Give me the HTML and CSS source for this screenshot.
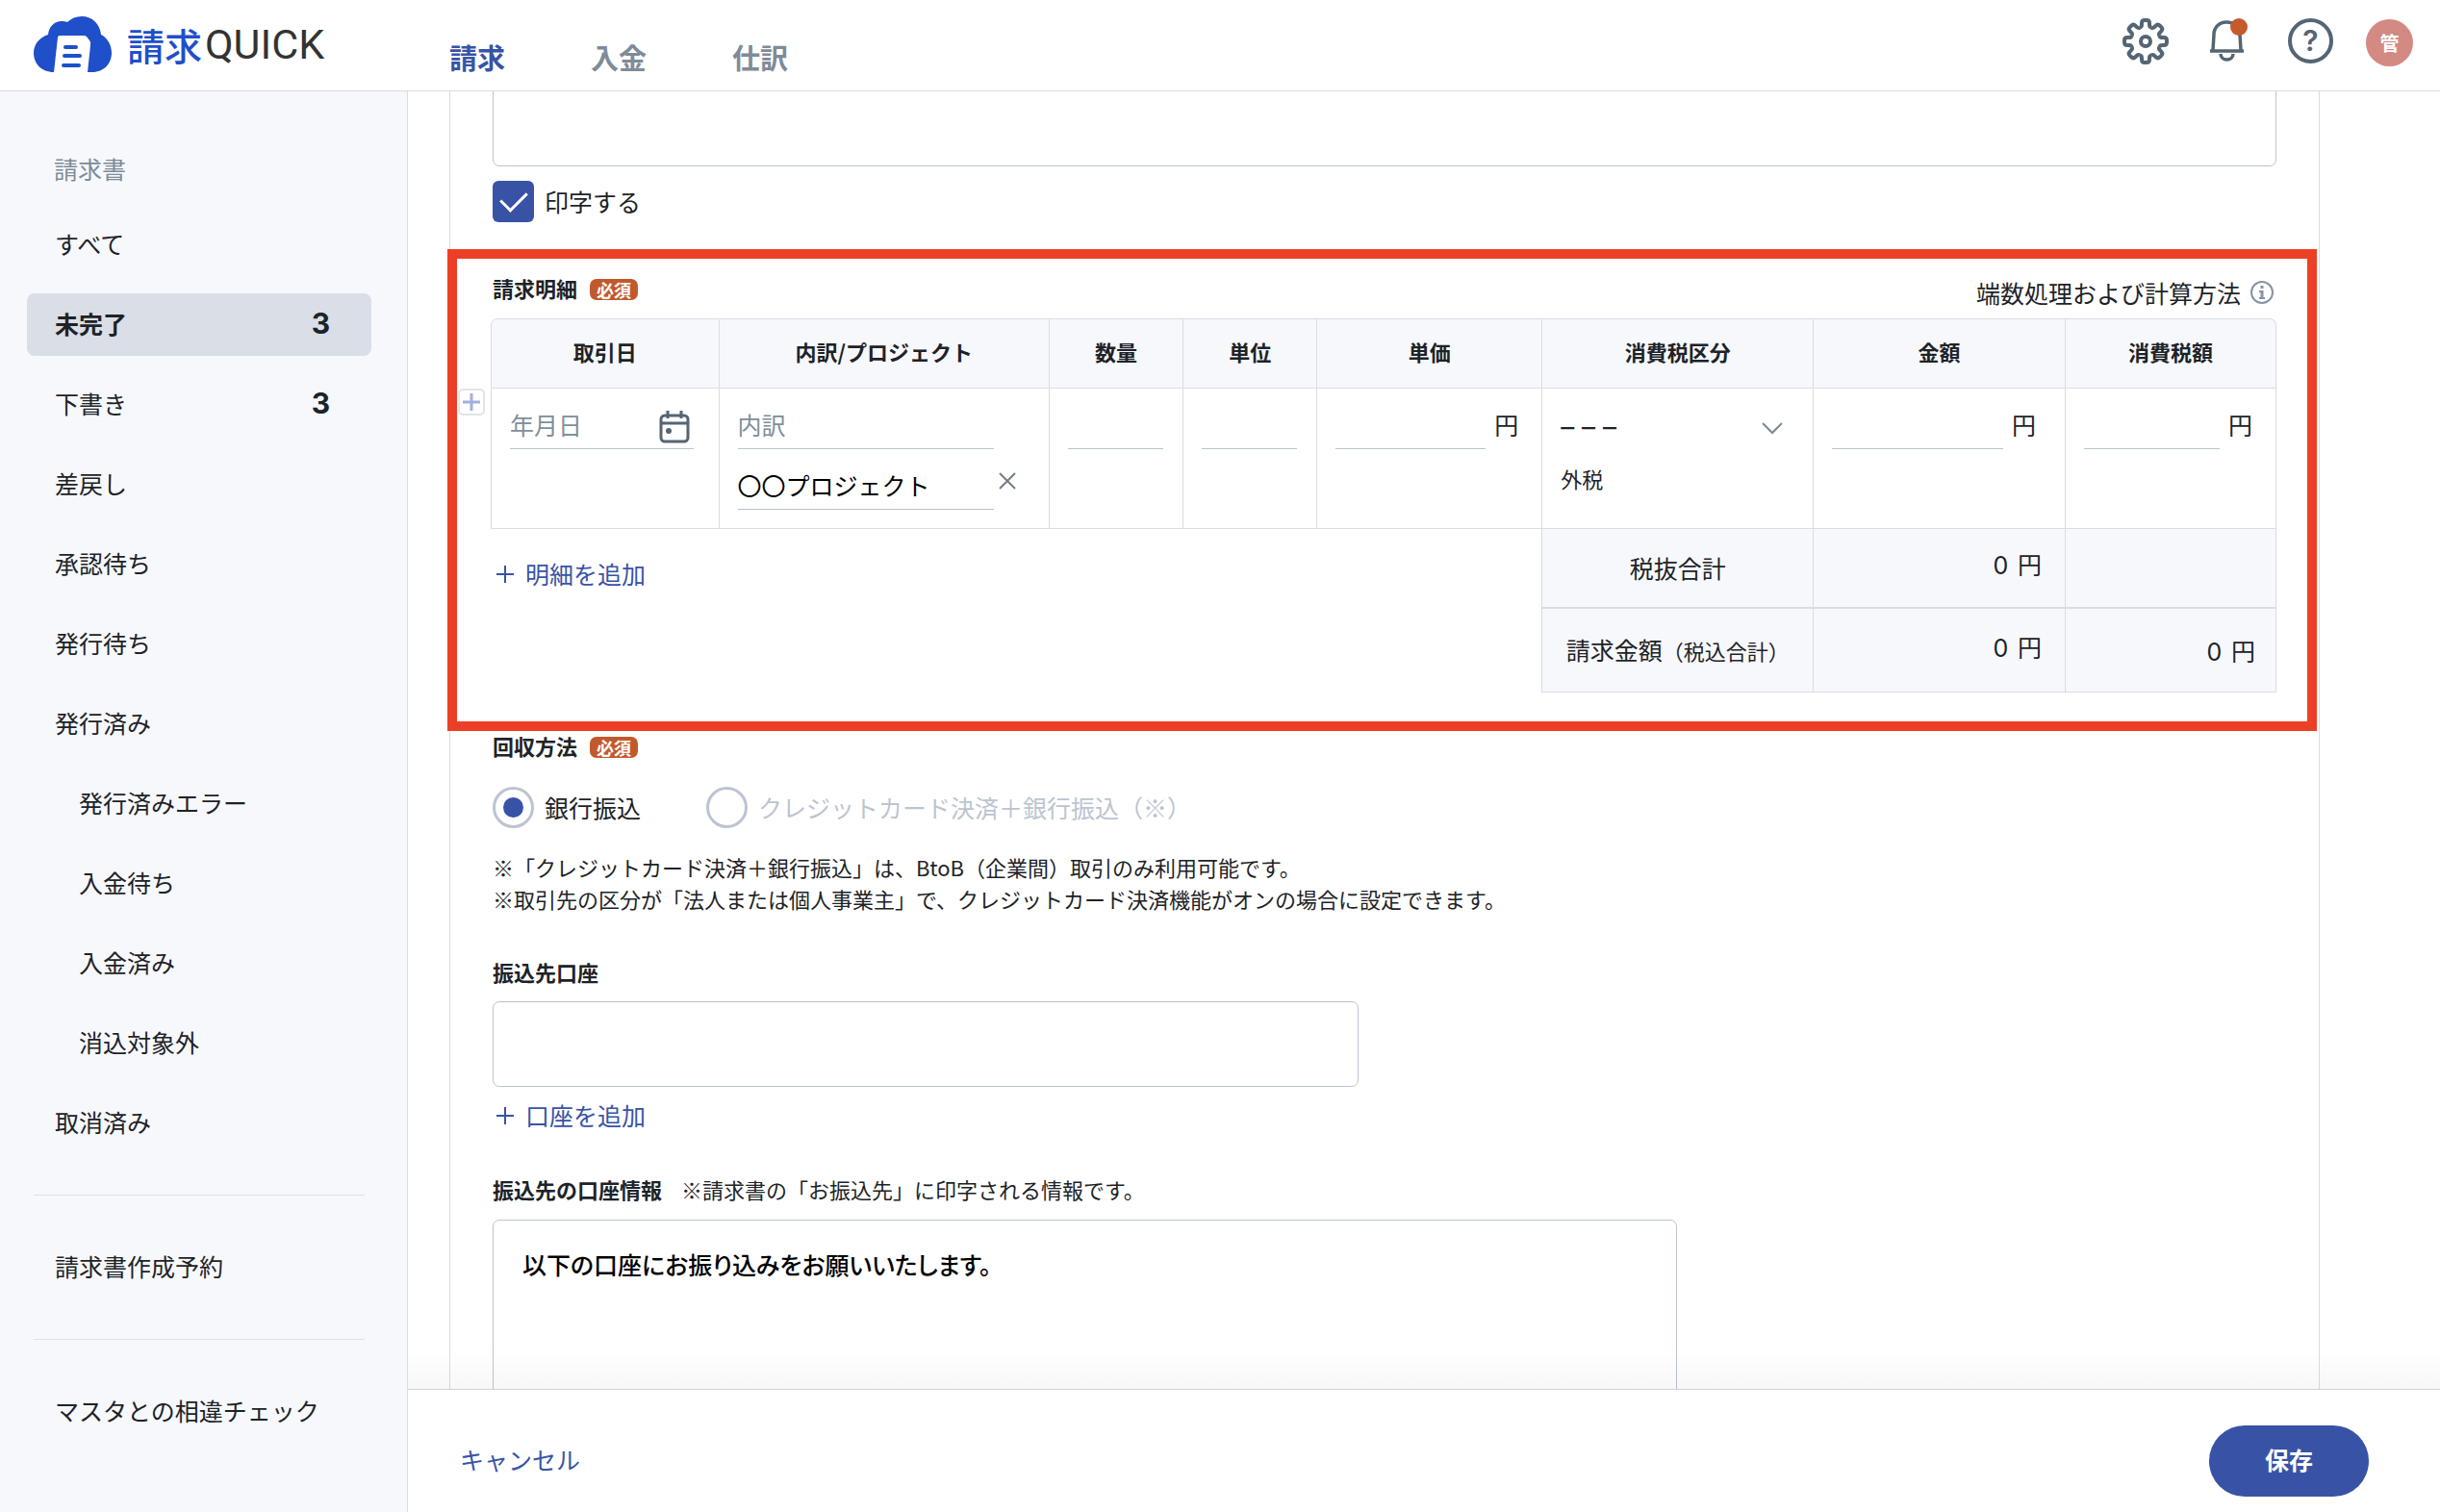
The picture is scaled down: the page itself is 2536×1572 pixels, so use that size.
FILE: index.html
```html
<!DOCTYPE html>
<html lang="ja">
<head>
    <meta charset="UTF-8">
    <meta name="viewport" content="width=device-width, initial-scale=1.0">
    <title>請求QUICK</title>
    <link rel="stylesheet" href="styles.css">
</head>
<body>
    <header class="header">
        <a class="logo" href="#">
            <svg width="81" height="58" viewBox="0 0 81 58" aria-hidden="true">
                <path fill="#1f4fc9" d="M21 58C8 58 0 49 0 38C0 29 6 22 15 19C16 10 22 5 29 5C31 5 33 5 35 6C39 2 44 0 50 0C61 0 69 8 70 19C76 22 81 29 81 38C81 49 73 58 61 58Z"/>
                <path fill="#fff" d="M21 58L25 22Q25 20 27 20H52Q54 20 55 21L58 25Q60 27 59 30L56 58Z"/>
                <path stroke="#1f4fc9" stroke-width="4" stroke-linecap="round" d="M33 32H44M32 41H48M31 51H47"/>
            </svg>
            <span class="logo-text">請求<span class="logo-quick">QUICK</span></span>
        </a>
        <nav class="tabs">
            <a class="tab active" href="#">請求</a>
            <a class="tab" href="#">入金</a>
            <a class="tab" href="#">仕訳</a>
        </nav>
        <div class="tools">
            <button class="tool" type="button" aria-label="設定">
                <svg width="48" height="48" viewBox="-24 -24 48 48" fill="none" stroke="#546574" stroke-width="4">
                    <defs><path id="tooth" d="M-6-14.3Q-4-15-4-17V-19Q-4-22-1-22H1Q4-22 4-19V-17Q4-15 6-14.3"/></defs>
                    <use href="#tooth"/>
                    <use href="#tooth" transform="rotate(45)"/>
                    <use href="#tooth" transform="rotate(90)"/>
                    <use href="#tooth" transform="rotate(135)"/>
                    <use href="#tooth" transform="rotate(180)"/>
                    <use href="#tooth" transform="rotate(225)"/>
                    <use href="#tooth" transform="rotate(270)"/>
                    <use href="#tooth" transform="rotate(315)"/>
                    <circle r="5"/>
                </svg>
            </button>
            <button class="tool" type="button" aria-label="お知らせ">
                <svg width="40" height="48" viewBox="0 0 40 48" fill="none" stroke="#546574" stroke-width="3.5">
                    <path d="M1 34H36M4 33L5 17C5 9 11 4 18 4C26 4 32 9 32 17L33 33M12 37C12 45 25 45 25 37"/>
                    <circle cx="31" cy="9" r="9" fill="#c55a2b" stroke="none"/>
                </svg>
            </button>
            <button class="tool help" type="button" aria-label="ヘルプ">?</button>
            <button class="avatar" type="button">管</button>
        </div>
    </header>

    <div class="body">
        <aside class="sidebar">
            <h2 class="side-title">請求書</h2>
            <a class="side-item" href="#">すべて</a>
            <a class="side-item current" href="#">未完了<span class="count">3</span></a>
            <a class="side-item" href="#">下書き<span class="count">3</span></a>
            <a class="side-item" href="#">差戻し</a>
            <a class="side-item" href="#">承認待ち</a>
            <a class="side-item" href="#">発行待ち</a>
            <a class="side-item" href="#">発行済み</a>
            <a class="side-item sub" href="#">発行済みエラー</a>
            <a class="side-item sub" href="#">入金待ち</a>
            <a class="side-item sub" href="#">入金済み</a>
            <a class="side-item sub" href="#">消込対象外</a>
            <a class="side-item" href="#">取消済み</a>
            <hr>
            <a class="side-item" href="#">請求書作成予約</a>
            <hr>
            <a class="side-item" href="#">マスタとの相違チェック</a>
        </aside>

        <div class="page">
            <main class="content">
                <form class="card" id="invoice">
                    <textarea class="box memo" aria-label="備考"></textarea>
                    <label class="choice print">
                        <input class="check" type="checkbox" checked>印字する
                    </label>

                    <!-- Line items -->
                    <section class="details">
                        <div class="details-head">
                            <h3 class="label">請求明細<span class="required">必須</span></h3>
                            <a class="rounding" href="#">端数処理および計算方法
                                <svg width="26" height="26" viewBox="0 0 26 26" fill="none" stroke="#8793a3" stroke-width="2">
                                    <circle cx="13" cy="13" r="11"/>
                                    <path stroke-width="3" d="M13 6V9M13 11V20"/>
                                    <path d="M10 12H13M10 19H16"/>
                                </svg>
                            </a>
                        </div>
                        <div class="table-wrap">
                            <button class="insert" type="button" aria-label="行を挿入">
                                <svg width="20" height="20" viewBox="0 0 20 20" stroke="#a3b0dc" stroke-width="3"><path d="M10 1V19M1 10H19"/></svg>
                            </button>
                            <table class="items">
                                <colgroup>
                                    <col class="c-date"><col class="c-name"><col class="c-small"><col class="c-small">
                                    <col class="c-price"><col class="c-tax"><col class="c-amount"><col class="c-taxamount">
                                </colgroup>
                                <thead>
                                    <tr>
                                        <th>取引日</th>
                                        <th>内訳/プロジェクト</th>
                                        <th>数量</th>
                                        <th>単位</th>
                                        <th>単価</th>
                                        <th>消費税区分</th>
                                        <th>金額</th>
                                        <th>消費税額</th>
                                    </tr>
                                </thead>
                                <tbody>
                                    <tr>
                                        <td class="date">
                                            <div class="line">
                                                <input type="text" placeholder="年月日" aria-label="取引日">
                                                <svg width="32" height="36" viewBox="0 0 32 36" fill="none" stroke="#546574" stroke-width="3">
                                                    <rect x="2" y="6" width="28" height="27" rx="4"/>
                                                    <path d="M2 14H30M9 1V9M23 1V9"/>
                                                    <circle cx="10" cy="22" r="3" fill="#546574" stroke="none"/>
                                                </svg>
                                            </div>
                                        </td>
                                        <td class="name">
                                            <div class="row">
                                                <div class="line"><input type="text" placeholder="内訳" aria-label="内訳"></div>
                                                <span class="clear"></span>
                                            </div>
                                            <div class="row">
                                                <div class="line"><input class="project" type="text" value="〇〇プロジェクト" aria-label="プロジェクト"></div>
                                                <button class="clear" type="button" aria-label="クリア">
                                                    <svg width="18" height="18" viewBox="0 0 18 18" stroke="#6f7d8b" stroke-width="2"><path d="M1 1L17 17M17 1L1 17"/></svg>
                                                </button>
                                            </div>
                                        </td>
                                        <td><div class="line"><input type="text" aria-label="数量"></div></td>
                                        <td><div class="line"><input type="text" aria-label="単位"></div></td>
                                        <td class="money"><div class="row"><div class="line"><input type="text" aria-label="単価"></div><span class="yen">円</span></div></td>
                                        <td>
                                            <div class="select">
                                                <select aria-label="消費税区分"><option>– – –</option></select>
                                                <svg width="24" height="14" viewBox="0 0 24 14" fill="none" stroke="#7a8896" stroke-width="2"><path d="M2 2L12 12L22 2"/></svg>
                                            </div>
                                            <div class="tax-type">外税</div>
                                        </td>
                                        <td class="money amount"><div class="row"><div class="line"><input type="text" aria-label="金額"></div><span class="yen">円</span></div></td>
                                        <td class="money"><div class="row"><div class="line"><input type="text" aria-label="消費税額"></div><span class="yen">円</span></div></td>
                                    </tr>
                                </tbody>
                                <tfoot>
                                    <tr class="subtotal">
                                        <td class="add-cell" colspan="5" rowspan="2">
                                            <button class="add" type="button">
                                                <svg width="18" height="18" viewBox="0 0 18 18" stroke="#3853a6" stroke-width="2"><path d="M9 0V18M0 9H18"/></svg>明細を追加
                                            </button>
                                        </td>
                                        <td class="total-label">税抜合計</td>
                                        <td class="total"><span class="num">0</span> 円</td>
                                        <td class="total"></td>
                                    </tr>
                                    <tr class="grand">
                                        <td class="total-label">請求金額<small>（税込合計）</small></td>
                                        <td class="total"><span class="num">0</span> 円</td>
                                        <td class="total last"><span class="num">0</span> 円</td>
                                    </tr>
                                </tfoot>
                            </table>
                        </div>
                    </section>

                    <!-- Payment method -->
                    <h3 class="label">回収方法<span class="required">必須</span></h3>
                    <div class="radios">
                        <label class="choice"><input class="radio" type="radio" name="method" checked>銀行振込</label>
                        <label class="choice disabled"><input class="radio" type="radio" name="method" disabled>クレジットカード決済＋銀行振込（※）</label>
                    </div>
                    <p class="notes">※「クレジットカード決済＋銀行振込」は、BtoB（企業間）取引のみ利用可能です。<br>※取引先の区分が「法人または個人事業主」で、クレジットカード決済機能がオンの場合に設定できます。</p>

                    <label class="label account-label" for="account">振込先口座</label>
                    <input class="box account" id="account" type="text">
                    <button class="add add-account" type="button">
                        <svg width="18" height="18" viewBox="0 0 18 18" stroke="#3853a6" stroke-width="2"><path d="M9 0V18M0 9H18"/></svg>口座を追加
                    </button>

                    <div class="info-head">
                        <label class="label" for="info">振込先の口座情報</label>
                        <span>※請求書の「お振込先」に印字される情報です。</span>
                    </div>
                    <textarea class="box info" id="info">以下の口座にお振り込みをお願いいたします。</textarea>
                </form>
            </main>
            <footer class="footer">
                <a class="cancel" href="#">キャンセル</a>
                <button class="save" type="submit" form="invoice">保存</button>
            </footer>
        </div>
    </div>
</body>
</html>
```

FILE: styles.css
```css
* {
    box-sizing: border-box;
}

body {
    margin: 0;
    height: 100vh;
    display: flex;
    flex-direction: column;
    overflow: hidden;
    background: #fff;
    color: #1d2327;
    font-family: "Noto Sans CJK JP", sans-serif;
    font-size: 25px;
    line-height: 33px;
}

a {
    color: inherit;
    text-decoration: none;
}

button, input, select, textarea {
    margin: 0;
    padding: 0;
    border: 0;
    background: none;
    color: inherit;
    font: inherit;
}

button {
    cursor: pointer;
}

svg {
    display: block;
    flex: none;
}

/* Header */
.header {
    flex: none;
    display: flex;
    height: 95px;
    border-bottom: 1px solid #d6dde4;
}

.logo {
    flex: none;
    display: flex;
    align-items: center;
    gap: 16px;
    width: 467px;
    padding: 0 0 2px 35px;
}

.logo-text {
    display: flex;
    align-items: center;
    gap: 3px;
    color: #1f4fc9;
    font-size: 39px;
    font-weight: 500;
}

.logo-quick {
    color: #333;
    font-family: Roboto, sans-serif;
    font-size: 43px;
    font-weight: 400;
}

.tabs {
    display: flex;
    align-items: center;
    gap: 89px;
    padding-top: 24px;
}

.tab {
    color: #7e8b98;
    font-size: 29px;
    font-weight: 700;
}

.tab.active {
    color: #3853a6;
}

.tools {
    display: flex;
    align-items: center;
    gap: 42px;
    margin-left: auto;
    padding: 0 28px 9px 0;
}

.tool {
    display: block;
}

.help {
    width: 47px;
    height: 47px;
    border: 4px solid #546574;
    border-radius: 50%;
    color: #546574;
    font-family: Inter, sans-serif;
    font-size: 30px;
    font-weight: 600;
}

.avatar {
    width: 49px;
    height: 49px;
    margin: 3px 0 0 -8px;
    border-radius: 50%;
    background: #d38a82;
    color: #fff;
    font-size: 20px;
    font-weight: 700;
}

.body {
    flex: 1;
    display: flex;
    min-height: 0;
}

/* Sidebar */
.sidebar {
    flex: none;
    display: flex;
    flex-direction: column;
    gap: 18px;
    width: 424px;
    padding: 48px 37px 0 28px;
    border-right: 1px solid #d6dde4;
    background: #f6f8fc;
}

.side-title {
    margin: 0;
    padding: 16px 28px 0;
    color: #7e8b98;
    font-size: 25px;
    font-weight: 400;
    line-height: 33px;
}

.side-title + .side-item {
    margin-top: 12px;
}

.side-item {
    display: flex;
    align-items: center;
    justify-content: space-between;
    height: 65px;
    padding: 0 43px 2px 29px;
    border-radius: 8px;
}

.side-item.sub {
    padding-left: 54px;
}

.side-item.current {
    background: #dadee7;
    font-weight: 700;
}

.count {
    font-family: Inter, sans-serif;
    font-size: 30px;
    font-weight: 700;
}

.sidebar hr {
    width: 344px;
    height: 1px;
    margin: 24px 0 24px 7px;
    border: 0;
    background: #dce1e8;
}

/* Page */
.page {
    flex: 1;
    display: flex;
    flex-direction: column;
    min-width: 0;
}

.content {
    flex: 1;
    min-height: 0;
    overflow: hidden;
    padding: 0 125px 0 43px;
}

.card {
    padding: 0 44px;
    border: solid #d8dde3;
    border-width: 0 1px;
}

.box {
    display: block;
    border: 1px solid #bcc3d0;
    border-radius: 7px;
    resize: none;
}

.memo {
    width: 100%;
    height: 120px;
    margin-top: -42px;
}

.choice {
    display: flex;
    align-items: center;
    gap: 11px;
}

.print {
    margin-top: 15px;
}

.check, .radio {
    appearance: none;
    flex: none;
    display: grid;
    place-items: center;
    width: 43px;
    height: 43px;
}

.check {
    border-radius: 6px;
    background: #3853a6;
}

.check::before {
    content: "";
    width: 23px;
    height: 13px;
    margin-top: -8px;
    border: solid #fff;
    border-width: 0 0 3px 3px;
    transform: rotate(-45deg);
}

.radio {
    border: 3px solid #bcc4d1;
    border-radius: 50%;
}

.radio:checked::before {
    content: "";
    width: 21px;
    height: 21px;
    border-radius: 50%;
    background: #3853a6;
}

.label {
    display: flex;
    align-items: center;
    gap: 13px;
    margin: 0;
    font-size: 22px;
    font-weight: 700;
    line-height: 33px;
}

.required {
    width: 50px;
    margin-top: 3px;
    border-radius: 7px;
    background: #c2592c;
    color: #fff;
    font-size: 18px;
    line-height: 22px;
    text-align: center;
}

/* Line items */
.details {
    margin: 28px -42px -1px -47px;
    padding: 0 32px 30px 35px;
    border: 10px solid #ec4026;
}

.details-head {
    display: flex;
    align-items: center;
    justify-content: space-between;
    height: 62px;
    padding: 0 2px 2px;
}

.rounding {
    display: flex;
    align-items: center;
    gap: 9px;
    margin-top: 10px;
}

.table-wrap {
    position: relative;
}

.insert {
    position: absolute;
    top: 73px;
    left: -34px;
    display: grid;
    place-items: center;
    width: 28px;
    height: 28px;
    border: 2px solid #e2e4e6;
    border-radius: 5px;
}

.items {
    width: 100%;
    table-layout: fixed;
    border-collapse: separate;
    border-spacing: 0;
}

.c-date {
    width: 12.8%;
}

.c-price {
    width: 12.6%;
}

.c-name {
    width: 18.5%;
}

.c-small {
    width: 7.5%;
}

.c-tax {
    width: 15.2%;
}

.c-amount {
    width: 14.1%;
}

.c-taxamount {
    width: 11.8%;
}

.items th, .items td {
    border: solid #d8dde4;
    border-width: 0 1px 1px 0;
}

.items th {
    height: 73px;
    padding: 0 0 4px;
    border-top-width: 1px;
    background: #f6f8fc;
    font-size: 22px;
}

.items th:first-child, .items tbody td:first-child {
    border-left-width: 1px;
}

.items th:first-child {
    border-top-left-radius: 7px;
}

.items th:last-child {
    border-top-right-radius: 7px;
}

.items tbody td {
    height: 146px;
    padding: 17px 20px 0 19px;
    vertical-align: top;
}

.items tbody .date {
    padding-right: 26px;
}

.items tbody .name {
    padding-right: 29px;
}

.items tbody .money {
    padding-right: 24px;
}

.items tbody .amount {
    padding-right: 30px;
}

.row {
    display: flex;
}

.row + .row {
    margin-top: 17px;
}

.line {
    flex: 1;
    display: flex;
    align-items: center;
    gap: 8px;
    min-width: 0;
    height: 46px;
    padding-right: 4px;
    border-bottom: 1px solid #b9c2ce;
}

.line input {
    flex: 1;
    width: 0;
    min-width: 0;
    height: 44px;
    padding-bottom: 5px;
}

.line input::placeholder {
    color: #808e9b;
    opacity: 1;
}

.line .project {
    color: #000;
}

.clear {
    display: grid;
    place-items: center;
    width: 28px;
    height: 32px;
}

.yen {
    padding: 4px 0 0 9px;
}

.select {
    position: relative;
}

.select select {
    appearance: none;
    width: 100%;
    height: 46px;
    font-family: Inter, sans-serif;
    font-size: 28px;
}

.select svg {
    position: absolute;
    top: 17px;
    right: 10px;
    pointer-events: none;
}

.tax-type {
    margin-top: 14px;
    font-size: 22px;
}

.items tfoot td {
    padding: 0;
    background: #f6f8fc;
}

.items tfoot .add-cell {
    padding: 30px 0 0 6px;
    border-bottom: 0;
    background: none;
    vertical-align: top;
}

.items .subtotal td {
    height: 83px;
    border-bottom-width: 2px;
}

.items .grand td {
    height: 87px;
}

.total-label {
    text-align: center;
}

.total-label small {
    font-size: 22px;
}

.items tfoot .total {
    padding: 0 24px 6px 0;
    text-align: right;
}

.items tfoot .last {
    padding: 2px 21px 0 0;
}

.num {
    margin-right: 4px;
    font-family: Inter, sans-serif;
}

.add {
    display: flex;
    align-items: center;
    gap: 12px;
    color: #3853a6;
}

/* Payment */
.radios {
    display: flex;
    gap: 68px;
    margin-top: 26px;
}

.disabled {
    color: #bcc4d1;
}

.notes {
    margin: 24px 0 0;
    font-size: 22px;
}

.account-label {
    margin-top: 43px;
}

.account {
    width: 900px;
    max-width: 100%;
    height: 89px;
    margin-top: 14px;
}

.add-account {
    margin: 13px 0 0 4px;
}

.info-head {
    display: flex;
    gap: 20px;
    margin-top: 44px;
    font-size: 22px;
}

.info {
    width: 1231px;
    max-width: 100%;
    height: 240px;
    margin-top: 15px;
    padding: 29px 30px;
    color: #000;
    font-weight: 500;
    font-feature-settings: "palt";
}

/* Footer */
.footer {
    position: relative;
    flex: none;
    display: flex;
    align-items: center;
    justify-content: space-between;
    height: 128px;
    padding: 21px 74px 0 54px;
    border-top: 1px solid #d3dae3;
    background: #fff;
}

.footer::before {
    content: "";
    position: absolute;
    right: 0;
    bottom: 100%;
    left: 0;
    height: 44px;
    background: linear-gradient(transparent, rgba(0, 0, 0, 0.03));
    pointer-events: none;
}

.cancel {
    padding-bottom: 4px;
    color: #3853a6;
}

.save {
    width: 166px;
    height: 74px;
    padding-bottom: 3px;
    border-radius: 37px;
    background: #3853a6;
    color: #fff;
    font-weight: 700;
}
```
